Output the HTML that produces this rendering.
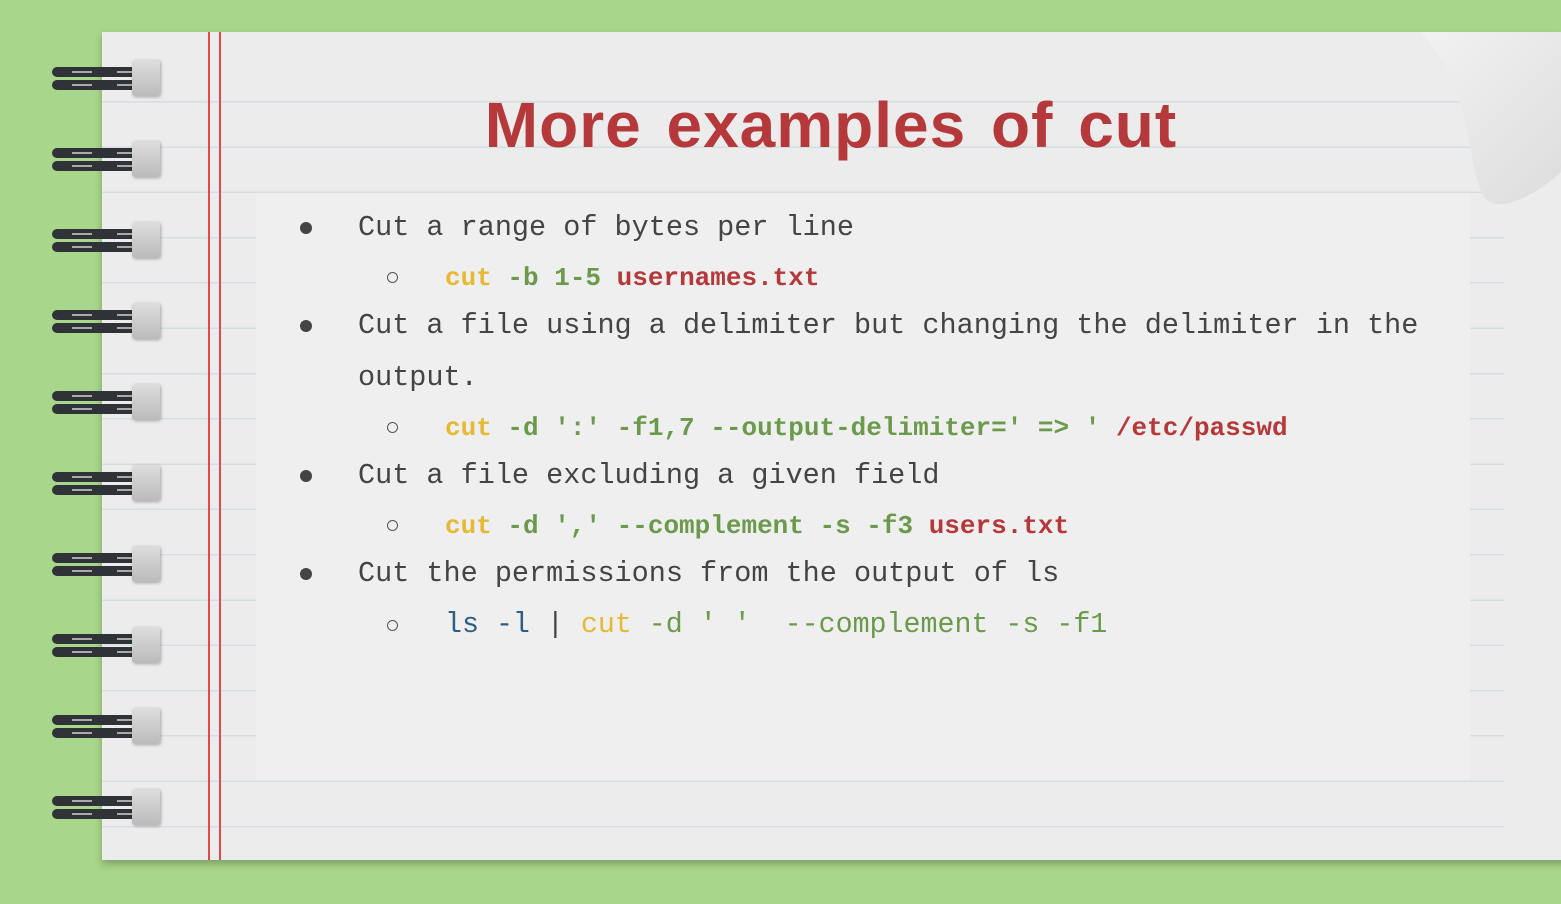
<!DOCTYPE html>
<html><head><meta charset="utf-8"><style>
body{margin:0;width:1561px;height:904px;background:#a8d68a;position:relative;overflow:hidden;font-family:"Liberation Mono",monospace}
.paper{position:absolute;left:102px;top:32px;width:1480px;height:828px;background:#ececec;box-shadow:0 4px 8px rgba(0,0,0,.25);border-radius:0 30px 0 0}
.lines{position:absolute;left:102px;top:101px;width:1402px;height:730px;background:repeating-linear-gradient(to bottom,#d2e0e2 0 1.5px,transparent 1.5px 45.3px)}
.red{position:absolute;top:32px;height:828px;width:2px;background:#e5484a}
.box{position:absolute;left:256px;top:194px;width:1214px;height:586px;background:#efefef}
.ring{position:absolute;left:52px;width:108px;height:30px}
.ring .b{position:absolute;right:0;top:-4px;width:28px;height:36px;background:linear-gradient(#ddd,#bbb);border-radius:3px;box-shadow:1px 1px 3px rgba(0,0,0,.3)}
.ring .w{position:absolute;left:0;height:10px;width:104px;background:#2f3236;border-radius:5px}
.ring .w::after{content:"";position:absolute;left:20px;top:4px;width:20px;height:2px;background:#aaa;box-shadow:45px 0 0 -0px #aaa}
h1{position:absolute;left:431px;width:800px;margin:0;top:88px;text-align:center;font:bold 64px "Liberation Sans",sans-serif;color:#b5383a;letter-spacing:1px;word-spacing:6px}
.t{position:absolute;white-space:pre;color:#444;font-size:28.5px}
.c{position:absolute;white-space:pre;font-size:26px;font-weight:bold}
.y{color:#e6b833}.g{color:#6c9a4c}.r{color:#b5383a}.bl{color:#2d5f86}
.dot{position:absolute;left:300px;width:12px;height:12px;border-radius:50%;background:#444}
.cir{position:absolute;left:387px;width:9px;height:9px;border-radius:50%;border:1.5px solid #555}
.curl{position:absolute;left:1420px;top:32px;width:141px;height:180px}
</style></head><body>
<div class="paper"></div>
<div class="lines"></div>
<div class="red" style="left:208px"></div><div class="red" style="left:219px"></div>
<div class="box"></div>
<div class="curl" style="clip-path:path('M0 0 H141 V140 C120 160 90 175 75 172 C65 170 60 160 55 140 C45 90 40 40 0 0Z');background:linear-gradient(135deg,#f2f2f2,#dcdcdc)"></div>
<h1>More examples of cut</h1>
<div class="dot" style="top:222px"></div><div class="t" style="left:358px;top:211px">Cut a range of bytes per line</div>
<div class="cir" style="top:272px"></div><div class="c" style="left:445px;top:263px"><span class="y">cut</span> <span class="g">-b 1-5</span> <span class="r">usernames.txt</span></div>
<div class="dot" style="top:320px"></div><div class="t" style="left:358px;top:309px">Cut a file using a delimiter but changing the delimiter in the</div>
<div class="t" style="left:358px;top:361px">output.</div>
<div class="cir" style="top:422px"></div><div class="c" style="left:445px;top:413px"><span class="y">cut</span> <span class="g">-d ':' -f1,7 --output-delimiter=' =&gt; '</span> <span class="r">/etc/passwd</span></div>
<div class="dot" style="top:470px"></div><div class="t" style="left:358px;top:459px">Cut a file excluding a given field</div>
<div class="cir" style="top:520px"></div><div class="c" style="left:445px;top:511px"><span class="y">cut</span> <span class="g">-d ',' --complement -s -f3</span> <span class="r">users.txt</span></div>
<div class="dot" style="top:568px"></div><div class="t" style="left:358px;top:557px">Cut the permissions from the output of ls</div>
<div class="cir" style="top:620px"></div><div class="t" style="left:445px;top:609px;font-size:28.3px"><span class="bl">ls -l</span> | <span class="y">cut</span> <span class="g">-d ' '  --complement -s -f1</span></div>
<div id="rings"></div>
<script>
var h='';for(var i=0;i<10;i++){var y=64+i*81;h+='<div class="ring" style="top:'+y+'px"><div class="w" style="top:3px"></div><div class="w" style="top:16px"></div><div class="b"></div></div>';}
document.getElementById('rings').innerHTML=h;
</script>
</body></html>
